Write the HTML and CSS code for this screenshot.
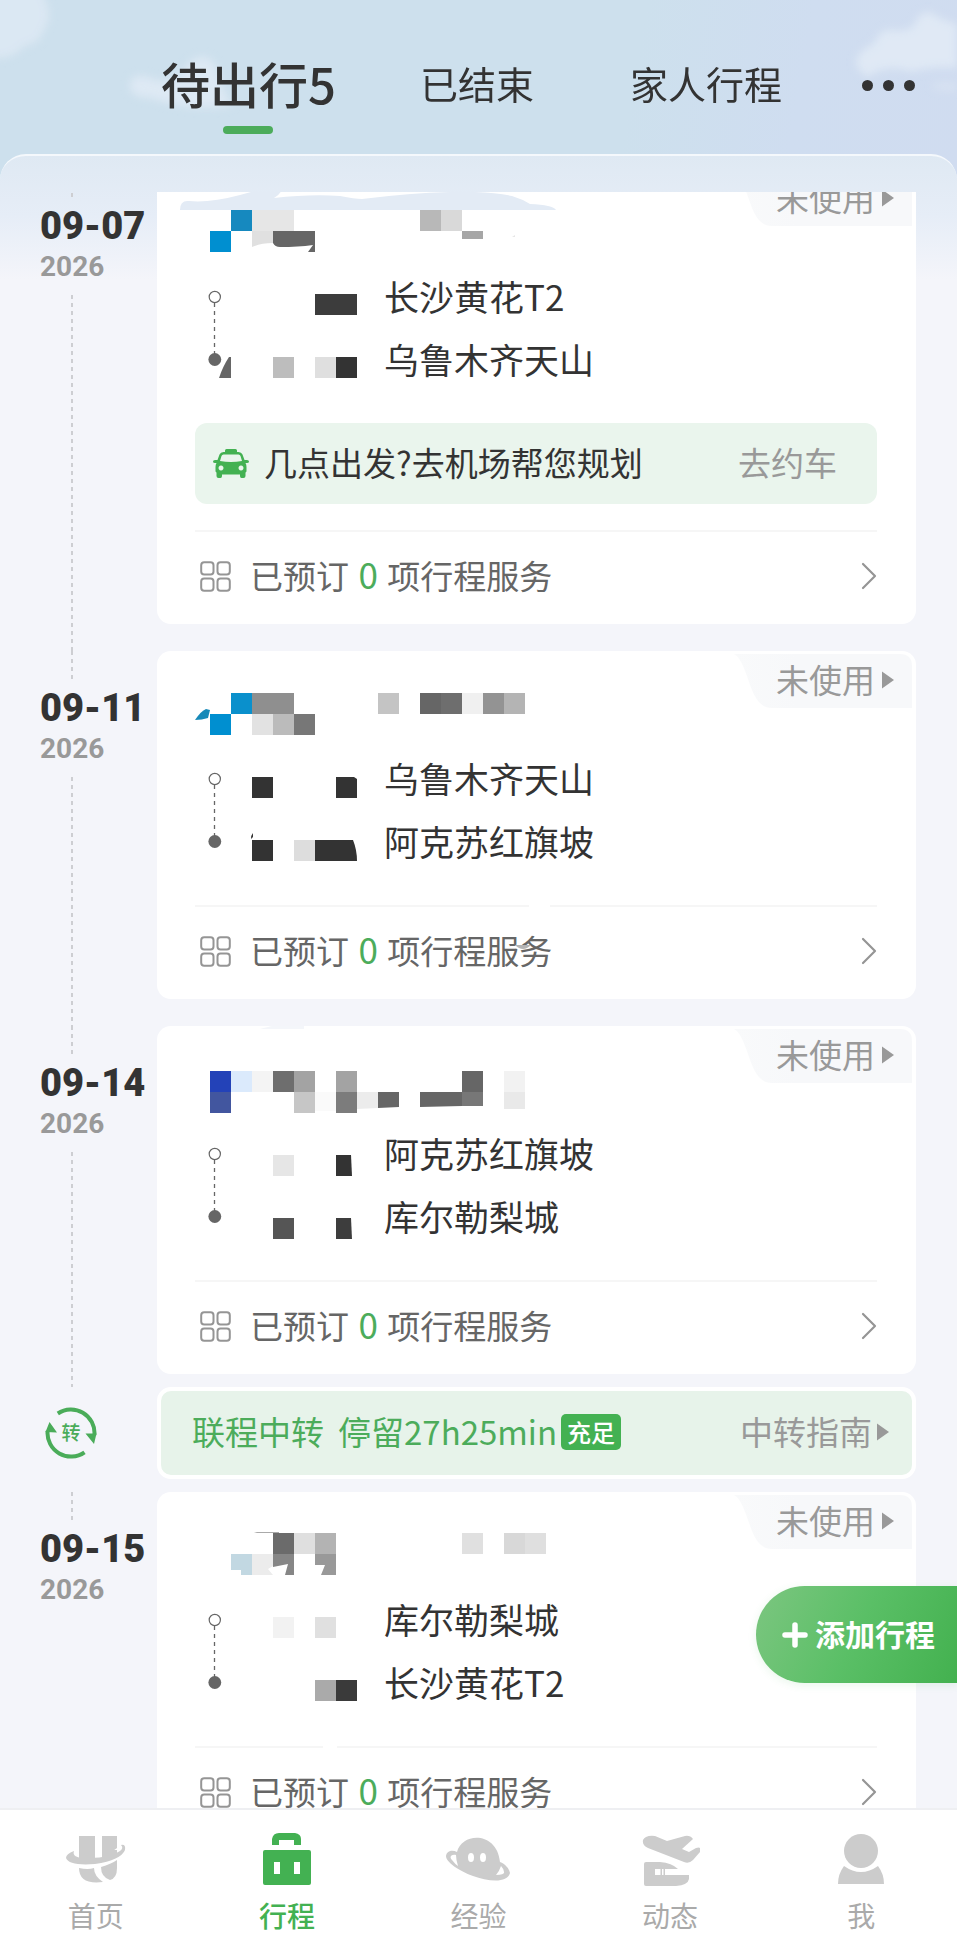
FILE: index.html
```html
<!DOCTYPE html>
<html lang="zh-CN">
<head>
<meta charset="utf-8">
<meta name="viewport" content="width=device-width, initial-scale=1">
<title>行程</title>
<link rel="stylesheet" href="styles.css">
</head>
<body>
<svg class="defs" aria-hidden="true">
  <defs>
    <filter id="soft" x="-20%" y="-20%" width="140%" height="140%"><feGaussianBlur stdDeviation="4"/></filter>
    <linearGradient id="tagfill" x1="0" y1="0" x2="1" y2="0"><stop offset="0" stop-color="#f9fafb"/><stop offset="0.35" stop-color="#f7f8fa"/><stop offset="1" stop-color="#f7f8fa"/></linearGradient>
    <symbol id="tagshape" viewBox="0 0 178 54"><path fill="url(#tagfill)" d="M0 0H166Q178 0 178 12V54H38C28 54 22 46 18 36C12 20 8 4 0 0Z"/></symbol>
    <symbol id="tri" viewBox="0 0 12 18"><path fill="#999" d="M0 0.500L12 9L0 17.500Z"/></symbol>
    <symbol id="grid" viewBox="0 0 31 31"><g fill="none" stroke="#959595" stroke-width="2"><rect x="1.200" y="1.200" width="12.300" height="12.300" rx="3"/><rect x="17.500" y="1.200" width="12.300" height="12.300" rx="3"/><rect x="1.200" y="17.500" width="12.300" height="12.300" rx="3"/><rect x="17.500" y="17.500" width="12.300" height="12.300" rx="3"/></g></symbol>
    <symbol id="chev" viewBox="0 0 16 28"><path fill="none" stroke="#959595" stroke-width="2.200" stroke-linecap="round" stroke-linejoin="round" d="M2 2L14 14L2 26"/></symbol>
    <g id="track">
      <path d="M214.500 134V186" stroke="#666" stroke-width="1.300" stroke-dasharray="4 4"/>
      <circle cx="214.800" cy="128" r="5.600" fill="#fff" stroke="#666" stroke-width="1.200"/>
      <circle cx="214.800" cy="190.500" r="6.400" fill="#666"/>
    </g>
  </defs>
</svg>

<div class="app">
  <header class="top">
    <svg class="sky" viewBox="0 0 957 154" preserveAspectRatio="xMidYMin slice" aria-hidden="true">
      <g fill="#e4ecf6" filter="url(#soft)">
        <path opacity=".6" d="M-10 -10H40Q56 14 44 30Q40 44 24 46Q14 60 -10 58Z"/>
        <path opacity=".7" d="M130 88Q128 74 146 76Q160 84 176 78L190 62Q206 50 216 66Q222 90 232 106Q190 112 150 98Q132 98 130 88Z"/>
        <path opacity=".8" d="M857 58Q862 48 874 44Q880 28 892 30Q906 32 914 26Q918 12 930 12Q940 20 957 24V68Q930 66 912 72Q890 64 872 74Q866 80 862 72Q854 66 857 58Z"/>
        <path opacity=".5" d="M930 86Q942 80 957 84V90Q940 92 930 86Z"/>
      </g>
    </svg>
    <nav class="tabs">
      <a class="tab tab-on" href="#pending">待出行5</a>
      <a class="tab" href="#done">已结束</a>
      <a class="tab tab-family" href="#family">家人行程</a>
      <button class="more" type="button" aria-label="更多"><i></i><i></i><i></i></button>
    </nav>
  </header>

  <main class="panel">
    <div class="list">

      <section class="row">
        <div class="rail"><i class="dash dash-top"></i><div class="day"><b>09-07</b><span>2026</span></div><i class="dash dash-rest"></i></div>
        <article class="card">
          <a class="tag" href="#s1"><svg class="tag-bg" preserveAspectRatio="none"><use href="#tagshape"/></svg><span>未使用</span><svg class="tri"><use href="#tri"/></svg></a>
          <svg class="flight" viewBox="195 0 380 97" aria-hidden="true">
            <path fill="#e3ebf5" d="M180 41Q180 31 189 32Q210 34 240 26L262 20H282Q280 26 274 29Q310 25 340 27Q355 30 362 30Q410 24 450 23Q490 22 512 27Q522 30 530 35Q553 36 556 41Z"/>
            <path fill="#1689bf" d="M231 41h21v21h-21z"/><path fill="#e6e6e6" d="M252 41h42v21h-42z"/>
            <path fill="#008fd0" d="M210 62h21v21h-21z"/><path fill="#e0e0e0" d="M252 62h21v12q-12 0-21 4z"/>
            <path fill="#666" d="M273 62h42v21h-7l5-7q-15 2-33 2q-5 0-7-4z"/>
            <path fill="#b8b8b8" d="M420 41h21v21h-21z"/><path fill="#d9d9d9" d="M441 41h21v21h-21z"/><path fill="#a6a6a6" d="M462 62h21v8h-21z"/>
            <path fill="#e6e6e6" d="M512 68l3-2v2z"/>
          </svg>
          <div class="route">
            <svg class="times" viewBox="195 97 189 126" aria-hidden="true"><use href="#track"/>
              <path fill="#3c3c3c" d="M315 125h42v21h-42z"/><path fill="#666" d="M231 188v21h-12q4-12 10-21z"/>
              <path fill="#bdbdbd" d="M273 188h21v21h-21z"/><path fill="#dfdfdf" d="M315 188h21v21h-21z"/><path fill="#333" d="M336 188h21v21h-21z"/>
            </svg>
            <div class="places"><span>长沙黄花T2</span><span>乌鲁木齐天山</span></div>
          </div>
          <div class="ride">
            <svg class="car" viewBox="0 0 36 29" aria-hidden="true"><path fill="#43b152" fill-rule="evenodd" d="M12 3V1.500Q12 0 13.500 0H22.500Q24 0 24 1.500V3H25.500Q28.500 3 29.500 5.500L31.500 11H34Q36 11 36 12.500Q36 14 34 14H32.500Q33.500 15.500 33.500 18V22Q33.500 23 32.500 23.500V27Q32.500 29 30.500 29H28.500Q27 29 27 27V25.500H9V27Q9 29 7.500 29H5.500Q3.500 29 3.500 27V23.500Q2.500 23 2.500 22V18Q2.500 15.500 3.500 14H2Q0 14 0 12.500Q0 11 2 11H4.500L6.500 5.500Q7.500 3 10.500 3ZM10.500 5.500Q9 5.500 8.500 7L7 12Q18 14 29 12L27.500 7Q27 5.500 25.500 5.500ZM8 16.500a2.500 2.500 0 1 0 .01 0ZM28 16.500a2.500 2.500 0 1 0 .01 0Z"/></svg>
            <span class="ride-text">几点出发?去机场帮您规划</span>
            <a class="ride-go" href="#ride">去约车</a>
          </div>
          <a class="service" href="#v1"><svg class="grid"><use href="#grid"/></svg><span>已预订 <em>0</em> 项行程服务</span><svg class="chev"><use href="#chev"/></svg></a>
        </article>
      </section>

      <section class="row">
        <div class="rail"><i class="dash dash-top"></i><div class="day"><b>09-11</b><span>2026</span></div><i class="dash dash-rest"></i></div>
        <article class="card">
          <a class="tag" href="#s2"><svg class="tag-bg" preserveAspectRatio="none"><use href="#tagshape"/></svg><span>未使用</span><svg class="tri"><use href="#tri"/></svg></a>
          <svg class="flight" viewBox="195 0 380 97" aria-hidden="true">
            <path fill="#1689b8" d="M195 69Q201 60 206 58L210 59L208 67Q202 69 195 69Z"/>
            <path fill="#0a90cc" d="M231 42h21v21h-21z"/><path fill="#8f8f8f" d="M252 42h42v21h-42z"/>
            <path fill="#008fd0" d="M210 63h21v21h-21z"/><path fill="#e2e2e2" d="M252 63h21v21h-21z"/><path fill="#bbb" d="M273 63h21v21h-21z"/><path fill="#777" d="M294 63h21v21h-21z"/>
            <path fill="#c4c4c4" d="M378 42h21v21h-21z"/><path fill="#666" d="M420 42h21v21h-21z"/><path fill="#6e6e6e" d="M441 42h21v21h-21z"/><path fill="#f0f0f0" d="M462 42h21v21h-21z"/><path fill="#939393" d="M483 42h21v21h-21z"/><path fill="#b4b4b4" d="M504 42h21v21h-21z"/>
          </svg>
          <div class="route">
            <svg class="times" viewBox="195 97 189 126" aria-hidden="true"><use href="#track"/>
              <path fill="#333" d="M252 126h21v21h-21zM336 126h18l3 2v19h-21zM252 189h21v21h-21zM315 189h38q4 10 4 21h-42zM251 188q0-4 2-6v4z"/><path fill="#ddd" d="M294 189h21v21h-21z"/>
            </svg>
            <div class="places"><span>乌鲁木齐天山</span><span>阿克苏红旗坡</span></div>
          </div>
          <a class="service gap-mid" href="#v2"><svg class="grid"><use href="#grid"/></svg><span>已预订 <em>0</em> 项行程服务</span><svg class="smudge" viewBox="0 0 16 6" aria-hidden="true"><path fill="#b4b4b4" d="M0 0H16Q8 8 0 0Z"/></svg><svg class="chev"><use href="#chev"/></svg></a>
        </article>
      </section>

      <section class="row row-joined">
        <div class="rail"><i class="dash dash-top"></i><div class="day"><b>09-14</b><span>2026</span></div><i class="dash dash-rest"></i></div>
        <article class="card">
          <a class="tag" href="#s3"><svg class="tag-bg" preserveAspectRatio="none"><use href="#tagshape"/></svg><span>未使用</span><svg class="tri"><use href="#tri"/></svg></a>
          <svg class="flight" viewBox="195 0 380 97" aria-hidden="true">
            <path fill="#f4f6fa" d="M260 3Q268 1 272 0H304V3Z"/>
            <path fill="#2342b8" d="M210 45h21v21h-21z"/><path fill="#dbeafc" d="M231 45h21v21h-21z"/><path fill="#f4f4f4" d="M252 45h21v21h-21z"/><path fill="#6e6e6e" d="M273 45h21v21h-21z"/><path fill="#a3a3a3" d="M294 45h21v21h-21zM336 45h21v21h-21z"/><path fill="#666" d="M462 45h21v21h-21z"/><path fill="#f2f2f2" d="M504 45h21v21h-21z"/>
            <path fill="#42569f" d="M210 66h21v21h-21z"/><path fill="#c6c6c6" d="M294 66h21v21h-21z"/><path fill="#fafafa" d="M315 66h21v19h-21z"/><path fill="#7c7c7c" d="M336 66h21v21h-21z"/><path fill="#ececec" d="M357 66h21v16l-21 1z"/><path fill="#666" d="M378 66h21v15l-21 1zM420 66h42v14l-42 1z"/><path fill="#777" d="M462 66h21v14h-21z"/><path fill="#e9e9e9" d="M504 66h21v17h-21z"/>
          </svg>
          <div class="route">
            <svg class="times" viewBox="195 97 189 126" aria-hidden="true"><use href="#track"/>
              <path fill="#e6e6e6" d="M273 129h21v21h-21z"/><path fill="#333" d="M336 129h15l1 21h-16z"/><path fill="#555" d="M273 192h21v21h-21z"/><path fill="#3d3d3d" d="M336 192h15l1 21h-16z"/>
            </svg>
            <div class="places"><span>阿克苏红旗坡</span><span>库尔勒梨城</span></div>
          </div>
          <a class="service" href="#v3"><svg class="grid"><use href="#grid"/></svg><span>已预订 <em>0</em> 项行程服务</span><svg class="chev"><use href="#chev"/></svg></a>
        </article>
      </section>

      <section class="row row-joined">
        <div class="rail rail-transfer">
          <svg class="turn" viewBox="0 0 52 52" aria-hidden="true">
            <g fill="none" stroke="#4aac59" stroke-width="4"><path d="M12.800 6.500A23.500 23.500 0 0 1 49.400 28"/><path d="M39.500 45.300A23.500 23.500 0 0 1 2.600 24"/></g>
            <path fill="#4aac59" d="M40.500 26.500L51.500 26.500L49 37ZM0.500 25L4.500 15L12 25.500Z"/>
            <text class="turn-text" x="26" y="33" text-anchor="middle">转</text>
          </svg>
        </div>
        <div class="transfer">
          <span>联程中转</span>
          <span class="stay">停留27h25min</span>
          <strong class="enough">充足</strong>
          <a class="guide" href="#guide"><span>中转指南</span><svg class="tri"><use href="#tri"/></svg></a>
        </div>
      </section>

      <section class="row">
        <div class="rail"><i class="dash dash-top"></i><div class="day"><b>09-15</b><span>2026</span></div></div>
        <article class="card">
          <a class="tag" href="#s4"><svg class="tag-bg" preserveAspectRatio="none"><use href="#tagshape"/></svg><span>未使用</span><svg class="tri"><use href="#tri"/></svg></a>
          <svg class="flight" viewBox="195 0 380 97" aria-hidden="true">
            <path fill="#aaa" d="M254 40h25v1h-22z"/>
            <path fill="#6b6b6b" d="M273 41h21v21h-21z"/><path fill="#dfdfdf" d="M294 41h21v21h-21zM525 41h21v21h-21z"/><path fill="#b3b3b3" d="M315 41h21v21h-21z"/><path fill="#e0e0e0" d="M462 41h21v21h-21z"/><path fill="#d8d8d8" d="M504 41h21v21h-21z"/>
            <path fill="#c2d8e2" d="M231 62h21v21h-11v-5h-10z"/><path fill="#ececec" d="M252 62h21v12l-5 3l5 6h-21z"/><path fill="#868686" d="M273 62h21v21h-9l3-11l-15 3z"/><path fill="#999" d="M315 62h21v21h-15l4-10h-10z"/>
          </svg>
          <div class="route">
            <svg class="times" viewBox="195 97 189 126" aria-hidden="true"><use href="#track"/>
              <path fill="#f2f2f2" d="M273 125h21v21h-21z"/><path fill="#e0e0e0" d="M315 125h21v21h-21z"/><path fill="#aaa" d="M315 188h21v21h-21z"/><path fill="#3a3a3a" d="M336 188h21v21h-21z"/>
            </svg>
            <div class="places"><span>库尔勒梨城</span><span>长沙黄花T2</span></div>
          </div>
          <a class="service gap-left" href="#v4"><svg class="grid"><use href="#grid"/></svg><span>已预订 <em>0</em> 项行程服务</span><svg class="chev"><use href="#chev"/></svg></a>
        </article>
      </section>
    </div>
    <button class="add" type="button"><svg class="plus" viewBox="0 0 26 26" aria-hidden="true"><path d="M13 3V23M3 13H23" stroke="#fff" stroke-width="5.500" stroke-linecap="round"/></svg><span>添加行程</span></button>
  </main>

  <nav class="bottom">
    <a class="item" href="#home">
      <svg viewBox="0 0 60 54" aria-hidden="true"><g fill="#ccc"><path d="M13 4H29V24Q21 26 13 24ZM36 4H51V16Q45 21 36 23Z"/><path d="M13 36Q22 38 28 36Q28 44 37 50Q13 53 13 36ZM35 35Q45 32 51 28V36Q51 46 44 48Q35 45 35 35Z"/><path d="M8 19Q0 22 0 26Q3 34 29 32Q55 28 59 18Q60 12 55 13Q58 16 54 19Q44 26 24 26Q5 27 8 19Z"/><path d="M13 18H29V28H13ZM36 18H51V22L36 27Z"/></g></svg>
      <span>首页</span></a>
    <a class="item item-on" href="#trips" aria-current="page">
      <svg viewBox="0 0 60 54" aria-hidden="true"><path fill="#43b152" fill-rule="evenodd" d="M15 13V7Q16 1 22 1H38Q44 2 44 7V13H37V8H22V13ZM8 18H52Q54 18 54 20V51Q54 53 52 53H8Q6 53 6 51V20Q6 18 8 18ZM17 30V42H23V30ZM37 30V42H43V30Z"/></svg>
      <span>行程</span></a>
    <a class="item" href="#guide">
      <svg viewBox="0 0 66 54" aria-hidden="true"><path fill="#ccc" fill-rule="evenodd" d="M12 20C17 0 52 -1 55 30C60 32 64 36 65 41C62 52 42 49 28 44C14 39 1 30 1 24C2 18 8 18 12 20ZM11 23C6 22 4 25 7 28Q10 32 13 34Q11 28 11 23ZM56 34Q54 40 51 43Q60 43 59 40Q59 37 56 34ZM26 21q-3 0-3 4.500t3 4.500t3-4.500t-3-4.500ZM38 21q-3 0-3 4.500t3 4.500t3-4.500t-3-4.500Z"/></svg>
      <span>经验</span></a>
    <a class="item" href="#news">
      <svg viewBox="-2 0 60 54" aria-hidden="true"><path fill="#ccc" fill-rule="evenodd" d="M4 5Q8 3 13 4L25 9L43 4Q48 3 51 7L40 17L47 20L54 16Q60 14 58 20L51 28Q47 32 42 30L6 16Q0 13 1 8Q2 6 4 5ZM4 30H18Q30 31 36 37H23V43H47V47Q46 53 34 54H4Q2 54 2 52V32Q2 30 4 30ZM13 37V43H18.500V37ZM20 37V43H21.500V37Z"/></svg>
      <span>动态</span></a>
    <a class="item" href="#me">
      <svg viewBox="0 0 60 54" aria-hidden="true"><g fill="#ccc"><circle cx="30" cy="19" r="17"/><path d="M13 34Q30 46 47 34Q53 42 53 52H7Q7 42 13 34Z"/></g></svg>
      <span>我</span></a>
  </nav>
</div>
</body>
</html>
```
FILE: styles.css
```css
* { box-sizing: border-box; }
body { margin: 0; font-family: "Noto Sans CJK SC", "Noto Sans", sans-serif; color: #333; background: #f4f5fa; }
a { color: inherit; text-decoration: none; }
button { border: 0; padding: 0; font-family: inherit; cursor: pointer; }
svg { display: block; flex: none; }
.defs { position: absolute; width: 0; height: 0; }

.app { display: flex; flex-direction: column; height: 100vh; background: linear-gradient(100deg, #cde0ed 65%, #cfddf0 82%, #d0dcf0); background-size: 100% 220px; background-repeat: no-repeat; }

/* header */
.top { position: relative; flex: none; padding: 48px 42px 0 161px; height: 154px; }
.sky { position: absolute; top: 0; left: 0; width: 100%; height: 100%; }
.tabs { position: relative; display: flex; align-items: center; height: 70px; font-size: 38px; line-height: 70px; }
.tab { white-space: nowrap; }
.tab + .tab { margin-left: 84px; }
.tab + .tab-family { margin-left: 96px; }
.tab-on { position: relative; font-size: 49px; font-weight: 500; }
.tab-on::after { content: ""; position: absolute; left: 50%; bottom: -16px; width: 50px; height: 8px; margin-left: -25px; border-radius: 4px; background: #4cac5b; }
.more { display: flex; gap: 10px; margin-left: auto; padding-top: 4px; background: none; }
.more i { width: 11px; height: 11px; border-radius: 50%; background: #333; }

/* timeline */
.panel { position: relative; flex: 1; min-height: 0; display: flex; flex-direction: column; padding-top: 36px; border-top: 2px solid #f4f8fc; border-radius: 26px 26px 0 0; background: linear-gradient(#dfe9f3, #e6edf7 60px, #f4f5fa 124px); }
.list { flex: 1; min-height: 0; overflow: hidden; display: flex; flex-direction: column; }
.list > :first-child { margin-top: -23px; }
.row { flex: none; display: grid; grid-template-columns: 157px 1fr; padding-right: 41px; }
.card { position: relative; margin-bottom: 27px; padding: 0 39px 0 38px; border-radius: 14px; background: #fff; }
.row-joined .card, .row-joined .transfer { margin-bottom: 13px; }
.rail { display: flex; flex-direction: column; padding-left: 40px; }
.dash { width: 2px; margin-left: 31px; background: repeating-linear-gradient(#cdced2 0 4px, transparent 4px 8px); }
.dash-top { height: 30px; }
.dash-rest { flex: 1; }
.day { display: flex; flex-direction: column; height: 96px; padding-top: 6px; font-family: Roboto, sans-serif; font-weight: 700; }
.day b { font-size: 38px; line-height: 42px; }
.day span { font-size: 28px; line-height: 40px; color: #999; }

.tag { position: absolute; top: 3px; right: 4px; width: 178px; height: 54px; display: flex; align-items: center; justify-content: flex-end; gap: 7px; padding: 0 18px 2px 0; color: #999; font-size: 33px; line-height: 50px; }
.tag-bg { position: absolute; top: 0; left: 0; width: 100%; height: 100%; }
.tag span, .tag .tri { position: relative; }
.tag span { padding-bottom: 2px; }
.tri { width: 12px; height: 18px; }
.flight { width: 380px; height: 97px; overflow: visible; }
.route { display: flex; padding-bottom: 31px; }
.times { width: 189px; height: 126px; }
.places { display: flex; flex-direction: column; margin-top: -2px; font-size: 35px; line-height: 63px; height: 126px; }
.ride { display: flex; align-items: center; height: 81px; margin-bottom: 26px; padding: 0 40px 0 18px; border-radius: 12px; background: #eaf5ed; font-size: 33px; }
.car { width: 36px; height: 29px; }
.ride-text { margin-left: 15px; padding-bottom: 4px; }
.ride-go { margin-left: auto; padding-bottom: 4px; color: #999; }
.service { position: relative; display: flex; align-items: center; height: 94px; padding: 0 0 4px 5px; border-top: 2px solid #f6f6f6; color: #666; font-size: 33px; line-height: 48px; }
.service span { margin-left: 19px; padding-bottom: 4px; }
.service em { margin: 0 2px; font-size: 35px; font-style: normal; color: #4cac5b; }
.grid { width: 31px; height: 31px; }
.chev { width: 16px; height: 28px; margin-left: auto; }
.gap-mid { border-image: linear-gradient(90deg, #f6f6f6 49%, #fff 49% 52%, #f6f6f6 52%) 2; }
.gap-left { border-image: linear-gradient(90deg, #f6f6f6 19%, #fff 19% 21%, #f6f6f6 21%) 2; }
.smudge { position: absolute; left: 320px; top: 38px; width: 16px; height: 6px; }

/* transfer */
.rail-transfer { padding: 20px 0 0 45px; }
.turn { width: 52px; height: 52px; }
.turn-text { font-size: 19px; font-weight: 500; fill: #4aac59; }
.transfer { display: flex; align-items: center; height: 92px; padding: 0 23px 2px 31px; border: 4px solid #fff; border-radius: 14px; background: #e7f3ea; color: #4cac5b; font-size: 33px; white-space: nowrap; }
.transfer span { padding-bottom: 2px; }
.stay { margin-left: 14px; }
.enough { margin-left: 4px; padding: 0 6px; border-radius: 5px; background: #43b152; color: #fff; font-size: 24px; font-weight: 500; line-height: 36px; }
.guide { display: flex; align-items: center; gap: 5px; margin-left: auto; color: #999; }

.add { position: absolute; right: 0; bottom: 125px; display: flex; align-items: center; gap: 7px; height: 97px; padding: 0 22px 0 26px; border-radius: 49px 0 0 49px; background: linear-gradient(115deg, #7cc680, #5abf66 50%, #43b14f); box-shadow: 0 2px 8px rgba(67, 177, 82, .12); color: #fff; font-size: 30px; font-weight: 700; }
.add span { padding-bottom: 4px; }
.plus { width: 26px; height: 26px; }

/* bottom navigation */
.bottom { position: relative; flex: none; display: grid; grid-template-columns: repeat(5, 1fr); height: 139px; padding-top: 22px; border-top: 2px solid #eeeff2; background: #fff; }
.item { display: flex; flex-direction: column; align-items: center; gap: 9px; color: #aaa; font-size: 28px; line-height: 40px; }
.item svg { height: 54px; }
.item-on { color: #43b152; font-weight: 500; }
```
